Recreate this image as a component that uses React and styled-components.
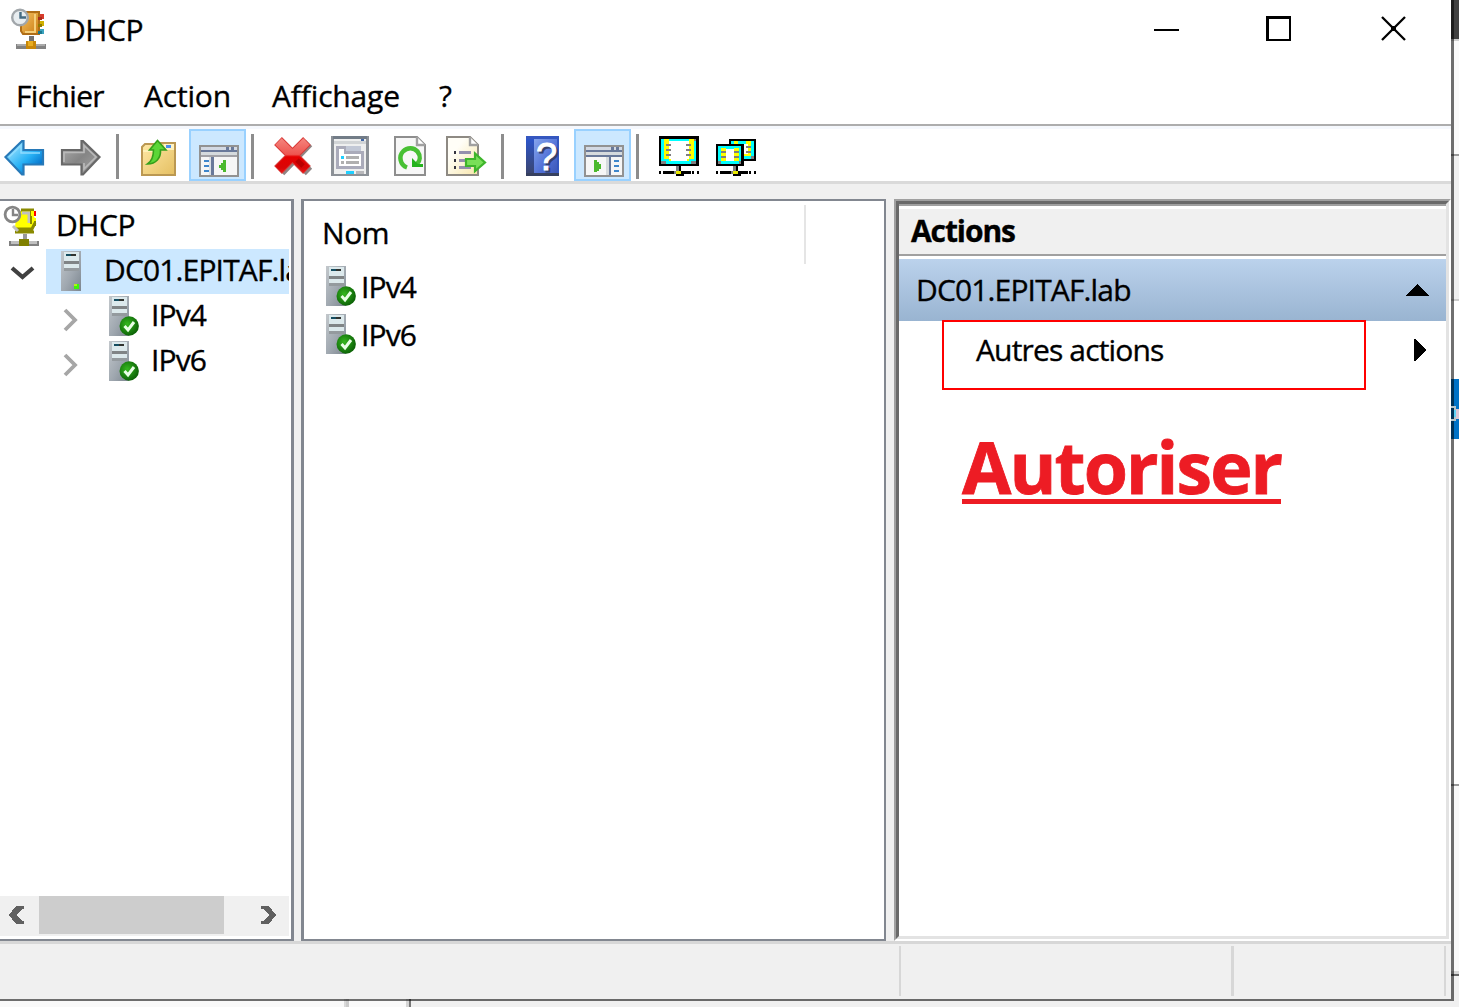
import React from "react";
import styled, { createGlobalStyle } from "styled-components";

const GlobalStyle = createGlobalStyle`
  * { box-sizing: border-box; }
  body {
    margin: 0;
    background: #f0f0f0;
    overflow: hidden;
    font-family: "Open Sans", "Noto Sans", sans-serif;
    font-size: 30px;
    color: #000;
  }
  svg { display: block; flex: none; overflow: visible; }
`;

/* ---------- desktop and window frame ---------- */

const Desktop = styled.div`
  display: grid;
  grid-template-columns: 1451px 8px;
  grid-template-rows: 999px 8px;
  width: 1459px;
  height: 1007px;
  overflow: hidden;
`;

const Window = styled.main`
  display: flex;
  flex-direction: column;
  min-width: 0;
  background: #f0f0f0;
`;

const SideStrip = styled.div`
  display: flex;
  flex-direction: column;
  overflow: hidden;
`;

const SideSegment = styled.div`
  flex: none;
  height: ${(p) => p.$h}px;
  background: ${(p) => p.$c};
  border-left: 3px solid rgba(0, 0, 0, 0.56);
`;

const BottomStrip = styled.div`
  display: flex;
  grid-column: 1 / 3;
`;

const BottomSegment = styled.div`
  flex: ${(p) => (p.$w ? "none" : 1)};
  width: ${(p) => (p.$w ? `${p.$w}px` : "auto")};
  background: ${(p) => p.$c};
  border-top: ${(p) => (p.$open ? "0" : "2px solid rgba(0, 0, 0, 0.56)")};
`;

const Text = styled.span`
  display: block;
  white-space: pre;
  line-height: 40px;
  letter-spacing: ${(p) => p.$ls || 0}px;
  font-weight: ${(p) => (p.$bold ? 700 : 400)};
  -webkit-text-stroke: 0.35px #000;
`;

/* ---------- title bar and menus ---------- */

const TitleBar = styled.header`
  display: flex;
  flex: none;
  height: 66px;
  padding: 9px 45px 0 11px;
  background: #fff;
`;

const Title = styled(Text)`
  flex: 1;
  margin: 1px 0 0 16px;
`;

const WindowControls = styled.div`
  display: flex;
  gap: 87px;
  padding-top: 7px;
  height: 32px;
`;

const CloseButton = styled.div`
  margin-left: 3px;
`;

const MenuBar = styled.nav`
  display: flex;
  flex: none;
  height: 58px;
  padding: 10px 0 0 16px;
  background: #fff;
`;

const MenuItem = styled(Text)`
  flex: none;
  width: ${(p) => p.$w}px;
`;

/* ---------- toolbar ---------- */

const Toolbar = styled.div`
  display: flex;
  flex: none;
  height: 60px;
  background: #fff;
  border-top: 2px solid #adadad;
  border-bottom: 3px solid #dadada;
  box-shadow: inset 0 3px 0 #f5f8fd;
`;

const ToolButton = styled.button`
  flex: none;
  width: 40px;
  height: 40px;
  margin: 10px 0 0 ${(p) => p.$gap}px;
  padding: 0;
  border: 0;
  background: none;
`;

const ToggleButton = styled.button`
  flex: none;
  width: 57px;
  height: 52px;
  margin: 3px 0 0 ${(p) => p.$gap}px;
  padding: 3px 0 0 8px;
  border: 2px solid #99d1ff;
  background: #cce8ff;
`;

const ToolSeparator = styled.div`
  flex: none;
  width: 3px;
  height: 45px;
  margin: 8px 0 0 ${(p) => p.$gap}px;
  background: #8d8d8d;
`;

/* ---------- panes ---------- */

const Panes = styled.div`
  display: grid;
  flex: none;
  grid-template-columns: 294px 7px 585px 8px 557px;
  height: 742px;
  margin-top: 15px;
`;

const TreePane = styled.aside`
  grid-column: 1;
  display: flex;
  flex-direction: column;
  justify-content: space-between;
  min-width: 0;
  background: #fff;
  border: solid #828790;
  border-width: 2px 3px 2px 0;
  padding: 3px 2px 3px 0;
`;

const TreeRow = styled.div`
  display: flex;
  height: 45px;
  padding-left: ${(p) => p.$indent}px;
`;

const Expander = styled.div`
  flex: none;
  width: ${(p) => p.$w}px;
  padding-top: ${(p) => p.$top}px;
`;

const TreeItem = styled.div`
  display: flex;
  flex: 1;
  min-width: 0;
  overflow: hidden;
  padding: 2px 0 0 ${(p) => p.$pad}px;
  background: ${(p) => (p.$selected ? "#cce8ff" : "transparent")};
`;

const TreeLabel = styled(Text)`
  margin: -1px 0 0 ${(p) => p.$gap}px;
`;

const ScrollBar = styled.div`
  display: flex;
  height: 40px;
  background: #f0f0f0;
`;

const ScrollArrow = styled.div`
  width: ${(p) => p.$w}px;
  padding: 10px 0 0 ${(p) => p.$pad}px;
`;

const ScrollThumb = styled.div`
  width: 185px;
  height: 38px;
  background: #cdcdcd;
`;

const ListPane = styled.section`
  grid-column: 3;
  background: #fff;
  border: solid #828790;
  border-width: 2px 2px 2px 3px;
`;

const ListHeader = styled.div`
  width: 502px;
  height: 59px;
  margin-top: 4px;
  padding: 8px 0 0 18px;
  border-right: 2px solid #e5e5e5;
`;

const ListRow = styled.div`
  display: flex;
  height: 48px;
  padding: 2px 0 0 22px;
`;

const ListLabel = styled(Text)`
  margin: 1px 0 0 5px;
`;

const ActionsPane = styled.section`
  grid-column: 5;
  display: flex;
  background: #696969;
  border: 2px solid;
  border-color: #a0a0a0 #fff #fff #a0a0a0;
`;

const ActionsBody = styled.div`
  flex: 1;
  background: #fff;
  border: 3px solid;
  border-color: #696969 #e3e3e3 #e3e3e3 #696969;
`;

const ActionsHeader = styled.div`
  height: 52px;
  padding: 5px 0 0 12px;
  background: #f0f0f0;
  border-top: 2px solid #a0a0a0;
  border-bottom: 2px solid #a0a0a0;
  box-shadow: inset 0 3px 0 #fff;
`;

const ActionsGroup = styled.div`
  display: flex;
  justify-content: space-between;
  height: 62px;
  margin-top: 3px;
  padding: 11px 17px 0 17px;
  background: linear-gradient(#bbd2ec, #99b4d1);
`;

const ActionRow = styled.div`
  position: relative;
  display: flex;
  justify-content: space-between;
  height: 70px;
  padding: 9px 20px 0 77px;
`;

const HighlightBox = styled.div`
  position: absolute;
  left: 43px;
  top: -1px;
  width: 424px;
  height: 70px;
  border: 2px solid #f00;
`;

const Annotation = styled.div`
  margin: 28px 0 0 63px;
  width: 319px;
  white-space: nowrap;
  color: #ed1c24;
  font-size: 71.5px;
  font-weight: 700;
  line-height: 96px;
  letter-spacing: -1.9px;
  height: 85px;
  border-bottom: 5px solid #ed1c24;
  -webkit-text-stroke: 0.8px #ed1c24;
`;

/* ---------- status bar ---------- */

const StatusBar = styled.footer`
  display: flex;
  flex: none;
  height: 58px;
  padding: 2px 5px 3px 0;
  background: #f0f0f0;
  border-top: 3px solid #d7d7d7;
`;

const StatusCell = styled.div`
  flex: none;
  width: ${(p) => p.$w}px;
  border-right: ${(p) => p.$line}px solid #d7d7d7;
`;

/* ---------- icons ---------- */

const Svg = ({ w = 40, h = 40, crisp, children }) => (
  <svg width={w} height={h} viewBox={`0 0 ${w} ${h}`} shapeRendering={crisp ? "crispEdges" : "auto"}>
    {children}
  </svg>
);

const GradientDefs = styled.svg`
  position: absolute;
`;

const SideGlyph = styled.svg`
  margin-left: -3px;
`;

const R = ({ x, y, w, h, c }) => <rect x={x} y={y} width={w} height={h} fill={c} />;

const Gradients = () => (
  <GradientDefs width="0" height="0">
    <defs>
      <linearGradient id="blue" x1="0" y1="0" x2="1" y2="1">
        <stop offset="0.2" stopColor="#8adafc" />
        <stop offset="0.55" stopColor="#27b1f5" />
        <stop offset="0.8" stopColor="#0878cf" />
      </linearGradient>
      <linearGradient id="gray" x1="0" y1="0" x2="1" y2="1">
        <stop offset="0" stopColor="#b0b0b0" />
        <stop offset="0.5" stopColor="#858585" />
        <stop offset="1" stopColor="#a8a8a8" />
      </linearGradient>
      <linearGradient id="folder" x1="0" y1="0" x2="1" y2="1">
        <stop offset="0" stopColor="#ffe9a6" />
        <stop offset="1" stopColor="#e5bf62" />
      </linearGradient>
      <linearGradient id="red" x1="0" y1="0" x2="0" y2="40" gradientUnits="userSpaceOnUse">
        <stop offset="0" stopColor="#f58b84" />
        <stop offset="0.46" stopColor="#ee5550" />
        <stop offset="0.52" stopColor="#e50000" />
        <stop offset="0.8" stopColor="#d80707" />
        <stop offset="1" stopColor="#f92020" />
      </linearGradient>
      <linearGradient id="orange" x1="0" y1="0" x2="1" y2="1">
        <stop offset="0" stopColor="#f5c263" />
        <stop offset="1" stopColor="#cb7d13" />
      </linearGradient>
      <linearGradient id="steel" x1="0" y1="0" x2="1" y2="1">
        <stop offset="0" stopColor="#c3c8cc" />
        <stop offset="0.55" stopColor="#a0a8b0" />
        <stop offset="1" stopColor="#7c868f" />
      </linearGradient>
      <linearGradient id="cream" x1="0" y1="0" x2="1" y2="1">
        <stop offset="0.3" stopColor="#fffef7" />
        <stop offset="1" stopColor="#f8e6aa" />
      </linearGradient>
      <linearGradient id="help" x1="0" y1="0" x2="1" y2="1">
        <stop offset="0" stopColor="#86a5ec" />
        <stop offset="0.6" stopColor="#5170d6" />
        <stop offset="1" stopColor="#3d57b6" />
      </linearGradient>
      <linearGradient id="spine" x1="0" y1="0" x2="0" y2="1">
        <stop offset="0" stopColor="#2c55ca" />
        <stop offset="1" stopColor="#3c4468" />
      </linearGradient>
      <radialGradient id="ok" cx="0.4" cy="0.4" r="0.6">
        <stop offset="0" stopColor="#36b81f" />
        <stop offset="1" stopColor="#0d6407" />
      </radialGradient>
    </defs>
  </GradientDefs>
);

const AppIcon = () => (
  <Svg w={37}>
    <path d="M12 3 H28 V25 H12 L10 22 V10 Z" fill="url(#orange)" stroke="#b06d16" strokeWidth="2" />
    <path d="M24 5 V23 H14" stroke="#f5cf7b" strokeWidth="2" fill="none" />
    <g shapeRendering="crispEdges">
      <R x={29} y={5} w={4} h={5} c="#d63b2b" /><R x={27} y={8} w={4} h={3} c="#a92d1d" />
      <R x={29} y={12} w={4} h={5} c="#d0b000" /><R x={27} y={15} w={4} h={3} c="#8f7a00" />
      <R x={29} y={20} w={4} h={5} c="#3ba2be" /><R x={27} y={22} w={4} h={3} c="#1a788f" />
      <R x={18} y={27} w={5} h={5} c="#737373" />
      <R x={5} y={35} w={30} h={5} c="#828282" /><R x={6} y={35} w={28} h={2} c="#aaa" />
      <R x={15} y={32} w={10} h={8} c="#c98708" /><R x={17} y={32} w={5} h={5} c="#e9ad20" />
    </g>
    <circle cx="9" cy="8.5" r="7.8" fill="#e8edf0" stroke="#a1a6aa" strokeWidth="2.4" />
    <path d="M9.5 3 V8.5 H15" stroke="#456b82" strokeWidth="2.4" fill="none" />
  </Svg>
);

const RootIcon = () => (
  <Svg w={37}>
    <path d="M13 5 H29 V9 L32 14 L28 26 H13 L11 21 Z" fill="#ff0" />
    <path d="M17 4 H30 M31 17 L28 23 H12 M11 26 H30" stroke="#8a8a00" strokeWidth="3" fill="none" />
    <path d="M18 7 H25 V17 M9 20 L14 25" stroke="#c0c0c0" strokeWidth="3" fill="none" />
    <g shapeRendering="crispEdges">
      <R x={26} y={5} w={2} h={13} c="#8a8a00" /><R x={28} y={12} w={4} h={3} c="#ff0" /><R x={30} y={15} w={2} h={5} c="#8a8a00" />
      <R x={27} y={5} w={3} h={5} c="#ff0" /><R x={30} y={5} w={2} h={5} c="#f00" />
      <R x={19} y={28} w={4} h={5} c="#999" />
      <R x={5} y={35} w={30} h={5} c="#808080" /><R x={7} y={35} w={26} h={3} c="#c0c0c0" />
      <R x={15} y={33} w={10} h={7} c="#808000" />
    </g>
    <circle cx="8.5" cy="8.5" r="7.4" fill="#fff" stroke="#858585" strokeWidth="2.8" />
    <path d="M9 3 V9 H14" stroke="#858585" strokeWidth="2.4" fill="none" />
  </Svg>
);

const ServerIcon = ({ ok, w = 20 }) => (
  <Svg w={w}>
    <R x={0} y={0} w={20} h={40} c="url(#steel)" />
    <g shapeRendering="crispEdges">
      <R x={3} y={1} w={15} h={18} c="#dce9ec" />
      <R x={5} y={3} w={10} h={2} c="#30332f" /><R x={5} y={3} w={5} h={2} c="#154d60" />
      <R x={3} y={10} w={15} h={3} c="#808486" />
      <R x={3} y={17} w={15} h={3} c="#949a9e" />
      {!ok && <><R x={13} y={33} w={5} h={5} c="#3df50b" /><R x={13} y={33} w={3} h={2} c="#b1f413" /></>}
    </g>
    {ok && (
      <>
        <circle cx="20.2" cy="30" r="9.7" fill="url(#ok)" />
        <path d="M15.5 30 L19 33.8 L25 26" stroke="#e9ffe6" strokeWidth="3" fill="none" />
      </>
    )}
  </Svg>
);

const BackIcon = () => (
  <Svg>
    <path d="M1.5 21 L18 5 H19.5 V14 H39 V28.5 H19.5 V38.5 H18 Z" fill="url(#blue)" stroke="#2779b8" strokeWidth="2.2" />
    <path d="M5 21 L17 9.5 V17 H36" stroke="#8edcff" strokeWidth="1.5" fill="none" />
  </Svg>
);

const ForwardIcon = () => (
  <Svg>
    <path d="M38.5 21 L22 5 H20.5 V14 H1 V28.5 H20.5 V38.5 H22 Z" fill="url(#gray)" stroke="#686868" strokeWidth="2.2" />
    <path d="M3 26 V16.5 H23 V9.5 L35 21 L23 33 V27" stroke="#b9b9b9" strokeWidth="1.7" fill="none" />
  </Svg>
);

const FolderUpIcon = () => (
  <Svg>
    <path d="M3 11 L6 8 H16 L18 7 H36 V39 H3 Z" fill="url(#folder)" stroke="#bb9852" strokeWidth="2" />
    <R x={25} y={8} w={10} h={4} c="#fff4c7" /><R x={27} y={9} w={5} h={3} c="#4d8ee8" />
    <path d="M4 15 H20 L23 13 H35" stroke="#fff0b7" strokeWidth="2" fill="none" />
    <path d="M8.5 28 C13 25 14.5 21 14.5 14 H10.5 L18.5 4.5 L27 14 H21.5 C22 22 17 28 8.5 28 Z" fill="#5bd637" stroke="#35a01b" strokeWidth="1.6" />
  </Svg>
);

const PaneIcon = ({ right }) => (
  <Svg crisp>
    <R x={0} y={8} w={40} h={32} c="#929292" />
    <R x={2} y={10} w={36} h={28} c="#f6f6f6" />
    <R x={2} y={10} w={36} h={3} c="#d3d9e3" />
    <R x={27} y={10} w={3} h={3} c="#69799a" /><R x={32} y={10} w={3} h={3} c="#69799a" />
    <R x={2} y={13} w={36} h={2} c="#69799a" />
    <R x={2} y={15} w={36} h={3} c="#d5dadd" />
    <R x={2} y={18} w={36} h={2} c={right ? "#69799a" : "#a1a1a6"} />
    {right ? (
      <>
        <R x={22} y={20} w={3} h={18} c="#d5dadd" /><R x={25} y={20} w={2} h={18} c="#69799a" />
        {[23, 28, 33].map((y) => <R key={y} x={30} y={y} w={5} h={2} c="#3e86cb" />)}
        <path d="M10 23 H13 V25 H15 V27 H17 V32 H15 V34 H13 V35 H10 Z" fill="#4bb92d" />
      </>
    ) : (
      <>
        <R x={12} y={20} w={3} h={18} c="#69799a" /><R x={10} y={20} w={2} h={18} c="#dce1e5" />
        {[23, 28, 33].map((y) => <R key={y} x={5} y={y} w={5} h={2} c="#3e86cb" />)}
        <path d="M27 23 H24 V26 H22 V28 H20 V31 H22 V33 H24 V35 H27 Z" fill="#4bb92d" />
      </>
    )}
  </Svg>
);

const DeleteIcon = () => (
  <Svg>
    <path d="M7 8 L35 36 M35 7 L7 36" stroke="#8f8585" strokeWidth="9" fill="none" />
    <path d="M4 5 L33 34 M33 5 L4 34" stroke="#d93a38" strokeWidth="11" fill="none" />
    <path d="M4.5 5.5 L32.5 33.5 M32.5 5.5 L4.5 33.5" stroke="url(#red)" strokeWidth="9" fill="none" />
    <path d="M23 24 L29 30" stroke="#b90000" strokeWidth="5" />
  </Svg>
);

const PropertiesIcon = () => (
  <Svg crisp>
    <R x={0} y={0} w={38} h={40} c="#8c9197" />
    <R x={2} y={0} w={34} h={3} c="#727c87" />
    <R x={3} y={3} w={32} h={35} c="#eeefef" />
    <R x={30} y={3} w={3} h={2} c="#4166a5" />
    <R x={3} y={5} w={32} h={3} c="#d1d4d6" />
    <R x={15} y={10} w={15} h={5} c="#c2c8d6" />
    <path d="M5 10 H15 V15 H33 V33 H5 Z" fill="#aaabba" />
    <path d="M8 13 H13 V18 H30 V30 H8 Z" fill="#fff" />
    <R x={10} y={20} w={3} h={3} c="#20cfff" /><R x={15} y={20} w={13} h={3} c="#b0b0b0" />
    <R x={10} y={25} w={3} h={3} c="#b0b0b0" /><R x={15} y={25} w={13} h={3} c="#b0b0b0" />
    <R x={15} y={35} w={8} h={3} c="#20cfff" /><R x={25} y={35} w={8} h={3} c="#b8b8bb" />
  </Svg>
);

const RefreshIcon = () => (
  <Svg>
    <path d="M1 1 H23 L31 9 V39 H1 Z" fill="#f7f7f7" stroke="#8e8e8e" strokeWidth="2" />
    <path d="M23 1 V9 H31" fill="#fff" stroke="#a0a0a0" strokeWidth="2.4" />
    <path d="M13 31.5 C6 29 4.5 20 9 15.5 C13 11 20 11 23.5 15.5 C27 20 26 25 23 28" stroke="#48c034" strokeWidth="4.5" fill="none" />
    <path d="M18 22 V31 H29 V28 H24 Z" fill="#24b31d" />
  </Svg>
);

const ExportIcon = () => (
  <Svg>
    <path d="M1 1 H24 L32 9 V39 H1 Z" fill="url(#cream)" stroke="#8e8a83" strokeWidth="2" />
    <path d="M24 1 V9 H32" fill="#fff" stroke="#a0a0a0" strokeWidth="2.4" />
    {[15, 23, 30].map((y) => (
      <g key={y} shapeRendering="crispEdges"><R x={8} y={y} w={2} h={3} c="#34343e" /><R x={13} y={y} w={12} h={3} c="#9590ad" /></g>
    ))}
    <path d="M20 23 H29 V17.5 L39 26.5 L29 35 V30 H20 Z" fill="#79df58" stroke="#3eb52b" strokeWidth="2.2" />
  </Svg>
);

const HelpIcon = () => (
  <Svg w={33}>
    <R x={0} y={0} w={33} h={40} c="#3557c0" />
    <R x={0} y={3} w={8} h={37} c="url(#spine)" />
    <R x={8} y={3} w={23} h={34} c="url(#help)" />
    <R x={0} y={37} w={33} h={3} c="#36405f" />
    <text x="12" y="36" fontFamily="Liberation Sans, sans-serif" fontSize="38" fill="#34406e" stroke="#34406e">?</text>
    <text x="10" y="34" fontFamily="Liberation Sans, sans-serif" fontSize="38" fill="#fff" stroke="#fff">?</text>
  </Svg>
);

const NetBase = () => (
  <>
    <R x={17} y={30} w={3} h={5} c="#808080" /><R x={20} y={30} w={2} h={5} c="#000" />
    <R x={0} y={35} w={2} h={3} c="#000" /><R x={4} y={35} w={28} h={3} c="#000" /><R x={38} y={35} w={2} h={3} c="#000" />
    <R x={15} y={35} w={3} h={3} c="#808080" /><R x={17} y={35} w={5} h={3} c="#e8e800" />
    <R x={17} y={38} w={8} h={2} c="#000" /><R x={33} y={35} w={2} h={3} c="#000" />
  </>
);

const MonitorIcon = () => (
  <Svg crisp>
    <R x={0} y={0} w={40} h={30} c="#000" />
    <R x={2} y={3} w={35} h={25} c="#0ff" />
    <R x={5} y={3} w={5} h={20} c="#ff0" /><R x={30} y={3} w={5} h={20} c="#ff0" />
    <R x={10} y={23} w={20} h={2} c="#ff0" />
    <R x={10} y={5} w={20} h={18} c="#fff" /><R x={12} y={22} w={16} h={3} c="#fff" />
    {[8, 13, 18].map((y) => <g key={y}><R x={7} y={y} w={5} h={2} c="#808080" /><R x={27} y={y} w={5} h={2} c="#808080" /></g>)}
    <R x={35} y={3} w={2} h={2} c="#808080" />
    <R x={2} y={25} w={5} h={3} c="#808080" /><R x={32} y={25} w={5} h={3} c="#808080" />
    <NetBase />
  </Svg>
);

const MonitorsIcon = () => (
  <Svg crisp>
    <R x={13} y={3} w={27} h={22} c="#000" />
    <R x={15} y={5} w={23} h={18} c="#0ff" />
    <R x={18} y={5} w={4} h={3} c="#ff0" /><R x={30} y={5} w={5} h={15} c="#ff0" />
    <R x={25} y={8} w={7} h={10} c="#fff" /><R x={27} y={18} w={5} h={2} c="#ff0" />
    <R x={30} y={10} w={5} h={2} c="#808080" /><R x={30} y={15} w={5} h={2} c="#808080" /><R x={35} y={20} w={3} h={3} c="#808080" />
    <R x={0} y={8} w={28} h={22} c="#000" />
    <R x={2} y={10} w={23} h={18} c="#0ff" />
    <R x={5} y={12} w={5} h={13} c="#ff0" /><R x={18} y={12} w={5} h={13} c="#ff0" />
    <R x={10} y={13} w={8} h={12} c="#fff" />
    <R x={5} y={15} w={5} h={2} c="#808080" /><R x={18} y={15} w={5} h={2} c="#808080" />
    <R x={5} y={20} w={5} h={2} c="#808080" /><R x={18} y={20} w={5} h={2} c="#808080" />
    <R x={2} y={25} w={3} h={3} c="#808080" /><R x={23} y={25} w={2} h={3} c="#808080" />
    <NetBase />
  </Svg>
);

const MinimizeIcon = () => <Svg w={25} h={25} crisp><R x={0} y={13} w={25} h={2} c="#000" /></Svg>;
const MaximizeIcon = () => (
  <Svg w={25} h={25} crisp><path d="M0 0 H25 V25 H0 Z M3 3 V23 H23 V3 Z" fillRule="evenodd" /></Svg>
);
const CloseIcon = () => (
  <Svg w={25} h={25}><path d="M1 1 L24 24 M24 1 L1 24" stroke="#000" strokeWidth="2.3" /><R x={10} y={10} w={5} h={5} c="#000" /></Svg>
);

const ChevronDown = () => (
  <Svg w={22} h={14}><path d="M1 2 L11.500 11 L22 2" stroke="#404040" strokeWidth="4.2" fill="none" /></Svg>
);
const ChevronRight = () => (
  <Svg w={14} h={22}><path d="M1 1 L11 11 L1 21" stroke="#a6a6a6" strokeWidth="3.8" fill="none" /></Svg>
);
const ScrollChevron = ({ right }) => (
  <Svg w={15} h={18} crisp>
    <path
      d={right
        ? "M0 0 H8 L15 9 L8 18 H0 V15 H2 L8 9 L2 3 H0 Z"
        : "M15 0 H7 L0 9 L7 18 H15 V15 H13 L7 9 L13 3 H15 Z"}
      fill="#606060"
    />
  </Svg>
);
const TriangleUp = () => <Svg w={23} h={26} crisp><path d="M11.5 14 L23 26 H0 Z" /></Svg>;
const TriangleRight = () => <Svg w={12} h={31} crisp><path d="M0 9 H2 L12 20 L2 31 H0 Z" /></Svg>;

/* ---------- data ---------- */

const sideSegments = [
  [39, "#404040"], [2, "#d0d0d0"], [113, "#fafafa"], [2, "#999"], [143, "#f0f0f0"], [2, "#ccc"],
  [78, "#fff"], [60, "#0072c6"], [345, "#fff"], [2, "#999"], [185, "#f9f9f9"], [3, "#d5d5d5"],
  [2, "#666"], [23, "#f0f0f0"],
];

const bottomSegments = [
  [344, "#f9f9f9"], [2, "#d9d9d9"], [3, "#cbcbcb"], [57, "#fafafa"], [3, "#d5d5d5"], [2, "#777"], [1043, "#f0f0f0"],
];

const protocols = ["IPv4", "IPv6"];

export default function App() {
  return (
    <Desktop>
      <GlobalStyle />
      <Window>
        <Gradients />
        <TitleBar>
          <AppIcon />
          <Title $ls={-0.4}>DHCP</Title>
          <WindowControls>
            <MinimizeIcon />
            <MaximizeIcon />
            <CloseButton><CloseIcon /></CloseButton>
          </WindowControls>
        </TitleBar>
        <MenuBar>
          <MenuItem $w={128} $ls={-0.65}>Fichier</MenuItem>
          <MenuItem $w={128} $ls={-0.2}>Action</MenuItem>
          <MenuItem $w={167} $ls={-0.15}>Affichage</MenuItem>
          <MenuItem $w={30}>?</MenuItem>
        </MenuBar>
        <Toolbar>
          <ToolButton $gap={4}><BackIcon /></ToolButton>
          <ToolButton $gap={17}><ForwardIcon /></ToolButton>
          <ToolSeparator $gap={15} />
          <ToolButton $gap={20}><FolderUpIcon /></ToolButton>
          <ToggleButton $gap={10}><PaneIcon /></ToggleButton>
          <ToolSeparator $gap={5} />
          <ToolButton $gap={20}><DeleteIcon /></ToolButton>
          <ToolButton $gap={17}><PropertiesIcon /></ToolButton>
          <ToolButton $gap={23}><RefreshIcon /></ToolButton>
          <ToolButton $gap={12}><ExportIcon /></ToolButton>
          <ToolSeparator $gap={15} />
          <ToolButton $gap={22}><HelpIcon /></ToolButton>
          <ToggleButton $gap={8}><PaneIcon right /></ToggleButton>
          <ToolSeparator $gap={5} />
          <ToolButton $gap={20}><MonitorIcon /></ToolButton>
          <ToolButton $gap={17}><MonitorsIcon /></ToolButton>
        </Toolbar>
        <Panes>
          <TreePane>
            <div>
              <TreeRow $indent={0}>
                <TreeItem $pad={4}><RootIcon /><TreeLabel $gap={15} $ls={-0.4}>DHCP</TreeLabel></TreeItem>
              </TreeRow>
              <TreeRow $indent={11}>
                <Expander $w={35} $top={17}><ChevronDown /></Expander>
                <TreeItem $pad={15} $selected><ServerIcon /><TreeLabel $gap={23} $ls={-0.85}>DC01.EPITAF.lab</TreeLabel></TreeItem>
              </TreeRow>
              {protocols.map((name) => (
                <TreeRow key={name} $indent={64}>
                  <Expander $w={30} $top={15}><ChevronRight /></Expander>
                  <TreeItem $pad={15}><ServerIcon ok w={30} /><TreeLabel $gap={12} $ls={-0.9}>{name}</TreeLabel></TreeItem>
                </TreeRow>
              ))}
            </div>
            <ScrollBar>
              <ScrollArrow $w={39} $pad={9}><ScrollChevron /></ScrollArrow>
              <ScrollThumb />
              <ScrollArrow $w={65} $pad={37}><ScrollChevron right /></ScrollArrow>
            </ScrollBar>
          </TreePane>
          <ListPane>
            <ListHeader><Text $ls={-0.4}>Nom</Text></ListHeader>
            {protocols.map((name) => (
              <ListRow key={name}><ServerIcon ok w={30} /><ListLabel $ls={-0.9}>{name}</ListLabel></ListRow>
            ))}
          </ListPane>
          <ActionsPane>
            <ActionsBody>
              <ActionsHeader><Text $bold $ls={-1.1}>Actions</Text></ActionsHeader>
              <ActionsGroup><Text $ls={-0.85}>DC01.EPITAF.lab</Text><TriangleUp /></ActionsGroup>
              <ActionRow>
                <Text $ls={-0.85}>Autres actions</Text>
                <TriangleRight />
                <HighlightBox />
              </ActionRow>
              <Annotation>Autoriser</Annotation>
            </ActionsBody>
          </ActionsPane>
        </Panes>
        <StatusBar>
          <StatusCell $w={901} $line={2} />
          <StatusCell $w={333} $line={3} />
          <StatusCell $w={212} $line={2} />
        </StatusBar>
      </Window>
      <SideStrip>
        {sideSegments.map(([h, c], i) => (
          <SideSegment key={i} $h={h} $c={c}>
            {h === 60 && (
              <SideGlyph width="8" height="60" viewBox="0 0 8 60">
                <path d="M0 28 H4 V31 M0 41 H4 V38" fill="none" stroke="#b9c4c8" strokeWidth="2" />
                <path d="M3 31 H5 V38 H3 Z" fill="#5fd2f5" />
                <path d="M5 30 H8 V40 H5 Z" fill="#d9c6d6" />
              </SideGlyph>
            )}
          </SideSegment>
        ))}
      </SideStrip>
      <BottomStrip>
        {bottomSegments.map(([w, c], i) => <BottomSegment key={i} $w={w} $c={c} />)}
        <BottomSegment $c="#f0f0f0" $open />
      </BottomStrip>
    </Desktop>
  );
}
